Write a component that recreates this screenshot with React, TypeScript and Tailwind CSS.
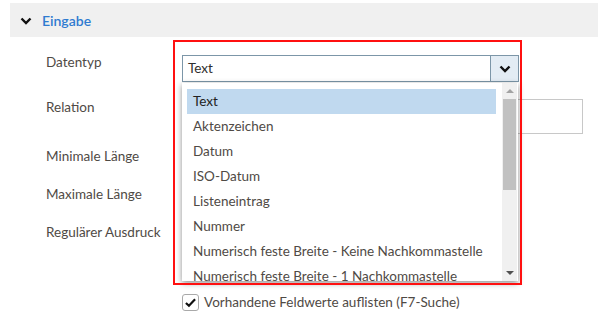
import React from 'react';

const options = [
  "Text",
  "Aktenzeichen",
  "Datum",
  "ISO-Datum",
  "Listeneintrag",
  "Nummer",
  "Numerisch feste Breite - Keine Nachkommastelle",
  "Numerisch feste Breite - 1 Nachkommastelle",
];

const Chevron = ({ className }: { className?: string }) => (
  <svg viewBox="0 0 12 8" width="12" height="8" className={className}>
    <path d="M1.5 1.5 L6 6 L10.5 1.5" fill="none" stroke="#111" strokeWidth="2.4" />
  </svg>
);

const Label = ({ children, className }: { children: React.ReactNode; className?: string }) => (
  <div className={"w-[182px] shrink-0 pl-[46px] text-[13.5px] leading-[17px] text-[#4f4a45] whitespace-nowrap " + (className || "")}>{children}</div>
);

const App = () => {
  return (
    <div className="relative w-[598px] h-[317px] bg-white overflow-hidden font-['Lato',sans-serif]">
      {/* section header */}
      <div className="mt-[3px] ml-[10px] h-[34px] bg-[#f0f0f0] flex items-center pl-[10px]">
        <Chevron className="mt-[1px]" />
        <span className="ml-[10px] text-[14px] font-semibold text-[#2f7bd0]">Eingabe</span>
      </div>

      <div className="mt-[18px] flex flex-col">
        {/* Datentyp */}
        <div className="flex items-start">
          <Label className="mt-[-1px]">Datentyp</Label>
          <div className="relative w-[337px]">
            <div className="h-[27px] border border-[#7c96a8] flex items-stretch bg-white">
              <div className="flex-1 flex items-center pl-[5px] text-[13.5px] text-[#2e2e2e]">Text</div>
              <div className="w-[28px] border-l border-[#7c96a8] bg-[#e3ecf4] flex items-center justify-center">
                <Chevron />
              </div>
            </div>

            {/* dropdown list */}
            <div className="absolute left-0 top-[28px] w-[336px] h-[198px] bg-white shadow-[0_2px_6px_rgba(0,0,0,0.45)] z-10 flex">
              <div className="flex-1 pt-[6px] pl-[5px] pr-[6px] overflow-hidden">
                {options.map((o, i) => (
                  <div
                    key={o}
                    className={
                      "h-[25px] flex items-center pl-[6px] text-[13.5px] whitespace-nowrap " +
                      (i === 0 ? "bg-[#c0d9ef] text-[#222]" : "text-[#4f4a45]")
                    }
                  >
                    {o}
                  </div>
                ))}
              </div>
              <div className="w-[15px] mr-[1px] bg-[#f0f0f0] flex flex-col items-center">
                <div className="h-[16px] flex items-center justify-center">
                  <div className="w-0 h-0 border-l-[4px] border-r-[4px] border-b-[4px] border-l-transparent border-r-transparent border-b-[#a3a3a3]" />
                </div>
                <div className="w-[13px] h-[91px] bg-[#c1c1c1]" />
                <div className="flex-1" />
                <div className="h-[16px] flex items-center justify-center">
                  <div className="w-0 h-0 border-l-[4px] border-r-[4px] border-t-[4px] border-l-transparent border-r-transparent border-t-[#505050]" />
                </div>
              </div>
            </div>

            {/* red highlight frame */}
            <div className="absolute left-[-9px] top-[-15px] w-[349px] h-[245px] border-2 border-[#ff1010] z-20 pointer-events-none" />
          </div>
        </div>

        {/* Relation */}
        <div className="flex items-start mt-[17px]">
          <Label className="pt-0">Relation</Label>
          <div className="w-[401px] h-[35px] border border-[#c8c8c8]" />
        </div>

        <div className="flex items-start mt-[14px]">
          <Label>Minimale Länge</Label>
        </div>
        <div className="flex items-start mt-[21px]">
          <Label>Maximale Länge</Label>
        </div>
        <div className="flex items-start mt-[21px]">
          <Label>Regulärer Ausdruck</Label>
        </div>

        {/* checkbox */}
        <div className="flex items-center mt-[51px] ml-[182px]">
          <div className="w-[17px] h-[17px] border border-[#a9a9a9] rounded-[3px] bg-white flex items-center justify-center">
            <svg viewBox="0 0 14 12" width="13" height="11">
              <path d="M2 6.5 L5.3 9.5 L12 2.5" fill="none" stroke="#111" strokeWidth="2.4" />
            </svg>
          </div>
          <span className="ml-[5px] text-[13.5px] text-[#4f4a45]">Vorhandene Feldwerte auflisten (F7-Suche)</span>
        </div>
      </div>
    </div>
  );
};

export default App;
